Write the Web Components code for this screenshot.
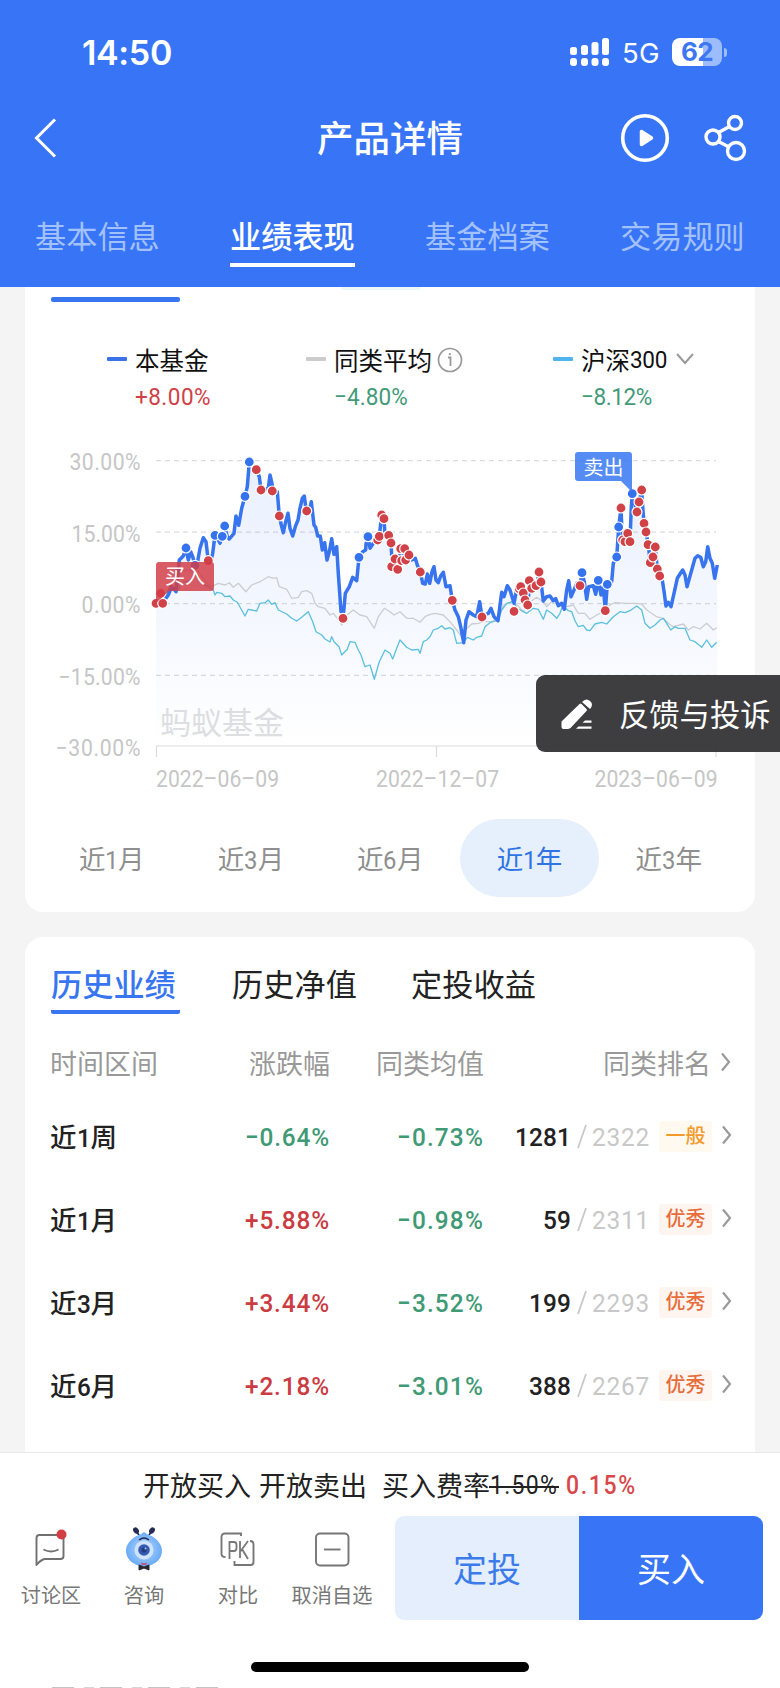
<!DOCTYPE html>
<html lang="zh-CN">
<head>
<meta charset="utf-8">
<title>产品详情</title>
<style>
html,body{margin:0;padding:0}
body{width:780px;height:1688px;overflow:hidden;background:#f4f4f4;font-family:Roboto,"Noto Sans CJK SC",sans-serif;color:#222}
</style>
</head>
<body>
<fund-page></fund-page>
<script>
const define = (name, html, setup) => {
  const t = document.createElement('template');
  t.innerHTML = html;
  customElements.define(name, class extends HTMLElement {
    connectedCallback() {
      if (this.shadowRoot) return;
      this.attachShadow({mode: 'open'}).appendChild(t.content.cloneNode(true));
      if (setup) setup(this, this.shadowRoot);
    }
  });
};

/* Condensed text (factor k) tracked to an exact width */
define('fit-text', `<style>:host{display:inline-block;white-space:nowrap;flex:none;text-align:left}span{display:inline-block;transform-origin:0 50%}</style><span><slot></slot></span>`,
  (el, root) => {
    const s = root.querySelector('span'), w = +el.getAttribute('w'), n = el.textContent.length;
    const k = +(el.getAttribute('k') || .92);
    s.style.letterSpacing = ((w / k - s.getBoundingClientRect().width) / n).toFixed(3) + 'px';
    s.style.transform = `scaleX(${k})`;
    s.style.marginRight = '-20px';
    el.style.width = w + 'px';
  });

define('status-bar', `<style>
:host{display:flex;height:104px;align-items:center;color:#fff;font-family:Inter,sans-serif;padding-left:82px;box-sizing:border-box}
.time{font-size:34px;font-weight:600}
.sig{margin-left:398px}
.net{font-size:27.5px;margin:2px 0 0 12px}
.bat{position:relative;width:50px;height:28px;border-radius:8px;margin-left:12px;background:linear-gradient(90deg,#fff 0 31px,#9dbcfb 31px);color:#3d78f2;font-size:26px;font-weight:700;line-height:28px;text-align:center}
.nub{width:3px;height:9px;border-radius:0 4px 4px 0;background:#9dbcfb;margin-left:2px}
</style>
<fit-text class="time" w="90" k="1">14:50</fit-text>
<svg class="sig" width="40" height="28" fill="#fff"><rect x="0" y="9" width="7" height="8" rx="2.5"/><rect x="11" y="7" width="7" height="10" rx="2.5"/><rect x="21.500" y="4" width="7" height="13" rx="2.500"/><rect x="32" y="0" width="7" height="17" rx="2.500"/><rect x="0" y="20" width="7" height="8" rx="3"/><rect x="11" y="20" width="7" height="8" rx="3"/><rect x="21.500" y="20" width="7" height="8" rx="3"/><rect x="32" y="20" width="7" height="8" rx="3"/></svg>
<fit-text class="net" w="38" k="1">5G</fit-text><div class="bat"><fit-text w="32" k="1">62</fit-text></div><div class="nub"></div>`);

define('nav-bar', `<style>
:host{display:grid;grid-template-columns:317px 148px 1fr;height:68px;align-items:center;color:#fff}
.t{font-size:36.500px;font-weight:500;white-space:nowrap;line-height:68px;margin:2px 0 -2px}
.l{padding-left:33px}svg{display:block}.r{display:flex;justify-content:flex-end;gap:31px;padding-right:33px}
</style>
<div class="l"><svg width="26" height="42" fill="none" stroke="#fff" stroke-width="3"><path d="M22 2.500 3.500 21 22 39.500"/></svg></div>
<div class="t">产品详情</div>
<div class="r">
<svg width="50" height="50" fill="none" stroke="#fff"><circle cx="25" cy="25" r="22.300" stroke-width="3.600"/><path d="M21.500 18.500v13l10-6.500z" fill="#fff" stroke-width="3.500" stroke-linejoin="round"/></svg>
<svg width="46" height="50" fill="none" stroke="#fff" stroke-width="3.400"><circle cx="34" cy="10" r="6.500"/><circle cx="12" cy="24" r="7"/><circle cx="35" cy="38" r="8.500"/><path d="m17.500 19.500 11-6M17.500 28.500l9.500 5"/></svg>
</div>`);

define('page-tabs', `<style>
:host{display:flex;height:115px;box-sizing:border-box;padding:41px 35px 0;justify-content:space-between;font-size:31.200px;color:#a3c1fb;line-height:49px}
div{width:125px;height:49.500px;white-space:nowrap}
.on{color:#fff;font-weight:500;border-bottom:4.500px solid #fff}
</style><div>基本信息</div><div class="on">业绩表现</div><div>基金档案</div><div>交易规则</div>`);

define('legend-item', `<style>
:host{display:grid;grid-template-columns:28px auto;color:#111;align-content:start}
i{width:20px;height:4px;border-radius:1px;background:var(--c);margin-top:15px}
.n{display:flex;align-items:center;font-size:24.500px;height:34px;white-space:nowrap}
.v{grid-column:2;font-size:24.500px;line-height:32px;margin-top:5px;color:var(--v)}
</style><i></i><div class="n"><slot></slot></div><div class="v"><slot name="v"></slot></div>`);

define('chart-legend', `<style>:host{display:grid;grid-template-columns:199px 247px 1fr;padding:0 0 0 82px;height:90px}
legend-item{--v:#429b78}svg{flex:none}</style>
<legend-item style="--c:#3c72e8;--v:#cf4147">本基金<fit-text slot="v" w="76">+8.00%</fit-text></legend-item>
<legend-item style="--c:#ccc">同类平均<svg width="26" height="26" style="margin:1px 0 0 5px" fill="none" stroke="#999" stroke-width="1.700"><circle cx="13" cy="13" r="11.500"/><path d="M11 10.500h2.500V19" stroke-width="1.800"/><circle cx="12.800" cy="7.200" r="1.100" fill="#999" stroke="none"/></svg><fit-text slot="v" w="74">−4.80%</fit-text></legend-item>
<legend-item style="--c:#50b5ee">沪深<fit-text w="37">300</fit-text><svg width="20" height="14" style="margin-left:8px" fill="none" stroke="#999" stroke-width="2"><path d="m2 2 8 9 8-9"/></svg><fit-text slot="v" w="71">−8.12%</fit-text></legend-item>`);

define('fund-chart', `<style>:host{display:block}svg{display:block;font-family:Roboto,"Noto Sans CJK SC",sans-serif}</style>
<svg width="730" height="370" viewBox="25 430 730 370">
<defs><linearGradient id="g" gradientUnits="userSpaceOnUse" x1="0" y1="460" x2="0" y2="746"><stop offset="0" stop-color="#3875f6" stop-opacity=".11"/><stop offset=".6" stop-color="#3875f6" stop-opacity=".05"/><stop offset="1" stop-color="#3875f6" stop-opacity="0"/></linearGradient></defs>
<g id="grid" stroke="#dcdcdc" stroke-width="1.200" stroke-dasharray="5 4"></g>
<path d="M156.500 757v-11H716v11M436.500 746v11" fill="none" stroke="#dcdcdc" stroke-width="1.200"/>
<g id="labels" fill="#c6c6c6" font-size="23.500"></g>
<text x="160" y="734" font-size="31" fill="#dedfe2">蚂蚁基金</text>
<path id="area" fill="url(#g)"/>
<g fill="none" stroke-linejoin="round"><path id="gray" stroke="#cbcdd0" stroke-width="1.300"/><path id="cyan" stroke="#5bc0de" stroke-width="1.300"/><path id="blue" stroke="#3774ee" stroke-width="3.500"/></g>
<g id="dots" stroke="#fff" stroke-width="1.200"></g>
<path d="M159 562h52q3 0 3 3v23q0 3-3 3h-42l-13 12v-38q0-3 3-3z" fill="#d23c46" fill-opacity=".84"/>
<text x="165" y="584" font-size="20" fill="#fff">买入</text>
<path d="M578 452h51q3 0 3 3v37l-11-11h-43q-3 0-3-3v-23q0-3 3-3z" fill="#3c7bf2" fill-opacity=".87"/>
<text x="583.500" y="474.500" font-size="20" fill="#fff">卖出</text>
</svg>`, (el, r) => {
  const L = 420, R = 1290;
  const pts = (s, o) => s.split(' ').map(p => p.split(',').map(Number)).map(([x, y]) => [(x + o) / 3, 440 + y / 3]);
  const join = (a, b) => pts(a, L).concat(pts(b, R));
  const path = p => 'M' + p.map(q => q.map(v => v.toFixed(1)).join(' ')).join('L');
  const blue = join(
   '48,490 68,488 85,465 95,440 108,455 118,360 130,348 138,325 145,360 152,335 158,350 165,375 172,370 180,325 190,293 198,305 205,362 212,365 218,340 225,286 235,300 240,310 247,289 254,258 262,290 268,297 282,280 288,228 296,256 305,205 315,169 322,140 328,66 349,89 358,110 363,150 385,145 390,105 396,130 398,153 412,155 418,228 424,255 430,278 437,245 444,220 450,265 458,288 466,260 474,240 480,205 487,175 493,168 499,213 508,215 514,185 522,255 527,262 533,288 541,288 547,330 554,308 561,360 568,335 575,296 582,343 590,320 595,400 603,515 611,515 616,460 628,440 638,412 650,422 657,352 668,335 677,330 678,312 684,290 690,325 700,310 712,305 718,289 725,225 732,236 735,285 745,285 753,309 757,380 765,357 772,388 782,326 794,326 790,365 807,345 815,360 826,355 832,375 841,396 848,430 856,432 862,402 869,430 876,395',
   '12,380 18,420 25,428 32,408 40,397 48,440 60,437 67,481 75,510 85,530 92,560 101,608 108,540 117,515 130,525 140,530 149,485 156,530 175,520 183,505 192,530 204,542 215,457 222,470 232,437 240,450 252,490 260,448 272,440 280,460 285,480 293,495 300,420 307,445 320,438 327,396 333,426 340,483 350,470 360,468 370,482 377,476 385,497 395,490 403,508 410,450 416,422 423,470 432,450 440,430 450,437 456,398 463,425 470,478 476,440 490,437 497,463 505,421 513,465 520,440 526,512 532,433 545,425 550,370 560,351 566,261 573,204 577,300 585,305 593,280 600,305 604,200 607,161 620,216 627,186 635,150 638,200 642,250 648,276 655,314 661,368 669,351 676,321 682,387 689,408 697,420 703,460 708,498 715,487 723,500 732,460 742,415 750,402 758,390 765,405 771,440 785,390 795,355 803,347 812,352 820,380 827,365 833,320 840,355 847,370 854,415 862,375');
  const gray = join(
   '48,490 70,480 100,420 120,395 140,390 155,395 165,380 180,400 200,430 215,440 235,430 255,435 268,428 280,442 295,430 318,455 335,435 360,425 385,410 400,415 410,413 418,440 440,448 455,475 475,472 485,455 500,452 515,460 525,490 535,500 555,505 570,525 580,520 600,545 605,555 615,530 640,510 660,525 680,530 703,565 715,530 733,505 750,515 762,525 780,515 800,535 820,535 840,547 855,530',
   '0,523 15,520 40,525 60,545 80,570 100,597 105,570 125,552 145,550 160,545 185,545 205,535 220,495 245,485 265,498 280,515 295,490 320,472 340,485 350,500 370,480 390,495 410,500 430,495 445,520 465,520 480,538 500,525 520,515 540,495 555,488 590,490 620,490 635,492 650,510 680,530 700,535 715,550 730,560 760,552 775,570 790,560 810,567 830,550 850,570 860,563');
  const cyan = join(
   '48,490 68,480 90,440 110,455 125,430 150,420 165,400 185,430 205,440 220,450 225,465 230,457 245,460 255,470 270,468 280,480 292,487 315,528 325,508 335,510 350,513 360,490 375,488 385,480 395,493 405,488 415,510 440,522 455,535 470,543 485,532 505,515 518,545 528,575 545,585 555,597 570,606 575,590 582,605 597,620 605,645 622,628 630,605 645,607 655,630 663,645 675,680 690,675 703,718 718,665 735,630 750,640 758,657 770,625 780,600 800,622 815,630 835,628 840,640 850,605 860,600',
   '0,590 10,570 25,565 35,557 45,567 60,563 70,570 80,610 100,608 112,592 130,600 140,592 155,588 165,560 180,548 205,540 215,510 230,490 250,485 262,505 280,515 290,520 310,505 325,508 340,538 350,510 365,520 380,535 390,520 395,505 403,500 415,512 425,515 435,542 445,560 460,556 470,570 480,572 495,552 515,547 530,552 550,530 570,515 585,518 600,512 620,498 635,510 645,550 660,565 675,555 690,540 700,535 710,550 722,570 735,560 745,565 765,565 780,600 795,605 815,622 830,600 845,622 860,607');
  const red = join(
   '48,490 62,460 68,490 205,362 349,89 363,150 397,153 418,228 500,213 609,535 725,225 732,236 713,300 718,289 746,286 753,309 755,380 765,357 773,388 782,326 794,326 785,362 797,360 807,345 841,396',
   '67,481 156,531 252,514 268,447 272,440 280,459 285,480 293,495 298,422 305,445 318,437 327,396 333,426 450,437 526,512 573,204 578,300 585,305 593,280 600,305 635,150 627,186 621,216 642,250 648,276 654,314 676,321 661,368 669,351 682,387 689,408');
  const sold = join('138,324 165,376 225,286 247,289 254,258 315,169 328,66 657,352 684,290', '456,398 505,421 532,433 560,351 566,261 607,161');
  const $ = id => r.getElementById(id);
  $('blue').setAttribute('d', path(blue));
  $('gray').setAttribute('d', path(gray));
  $('cyan').setAttribute('d', path(cyan));
  $('area').setAttribute('d', path(blue) + 'V746H156Z');
  const dot = c => ([x, y]) => `<circle cx="${x.toFixed(1)}" cy="${y.toFixed(1)}" r="5" fill="${c}"/>`;
  $('dots').innerHTML = sold.map(dot('#3572ee')).join('') + red.map(dot('#d04247')).join('');
  $('grid').innerHTML = [460.7, 532.2, 603.7, 675.3].map(y => `<path d="M156 ${y}H716"/>`).join('');
  const rows = [['30.00%', 470, 71], ['15.00%', 541.7, 69], ['0.00%', 613.2, 59], ['−15.00%', 684.7, 82], ['−30.00%', 756, 85]];
  const dates = [['2022–06–09', 156], ['2022–12–07', 376], ['2023–06–09', 594.5]];
  const K = .9;
  const label = (t, x, y, w) => `<text transform="translate(${x} ${y}) scale(${K} 1)" textLength="${(w / K).toFixed(1)}">${t}</text>`;
  $('labels').innerHTML =
    rows.map(([t, y, w]) => label(t, 140.5 - w, y, w)).join('') +
    dates.map(([t, x]) => label(t, x, 787, 123)).join('');
});

define('period-tabs', `<style>
:host{display:grid;grid-template-columns:repeat(5,139.300px);padding-left:17px;height:78px;font-size:26.500px;color:#8f8f8f;line-height:81px;text-align:center}
div{display:flex;justify-content:center;height:77.500px}
.on{background:#e6effc;color:#2f74e4;border-radius:39px}
</style><div>近<fit-text w="12.5" k="0.9">1</fit-text>月</div><div>近<fit-text w="13.5" k="0.9">3</fit-text>月</div><div>近<fit-text w="13.5" k="0.9">6</fit-text>月</div><div class="on">近<fit-text w="12.5" k="0.9">1</fit-text>年</div><div>近<fit-text w="13.5" k="0.9">3</fit-text>年</div>`);

define('chart-card', `<style>
:host{display:block;height:625px;background:#fff;border-radius:0 0 18px 18px;overflow:hidden}
.top{display:flex;height:3px;padding-left:316px}.chip{width:80px;background:#edf6f9;border-radius:0 0 6px 6px}
.line{width:129px;height:5px;border-radius:2px;background:#3875f0;margin:7px 0 40px 26px}
period-tabs{margin-top:19px}chart-legend{height:88px}
</style><div class="top"><div class="chip"></div></div><div class="line"></div><chart-legend></chart-legend><fund-chart></fund-chart><period-tabs></period-tabs>`);

define('history-row', `<style>
:host{display:grid;grid-template-columns:100px 179px 154px 166px 62px 20px;height:83px;align-items:center;font-size:26.500px;font-weight:500;color:#222}
.p{margin:-3px 0 0 -1px;display:flex;align-items:baseline}
.n{text-align:right;margin-top:-1px}.up{color:#cb3b42}.dn{color:#3f9a75}
.rank{display:flex;justify-content:flex-end;align-items:center;margin-top:-1px}.all{color:#c8c8c8;font-weight:400;display:flex;align-items:center}
.b{justify-self:end;width:53px;height:31px;line-height:30px;border-radius:3px;font-size:20px;text-align:center;background:#fef5f1;color:#e76d3b}
.b.m{background:#fff9ef;color:#f39a2d}
svg{justify-self:end;margin-bottom:3px}
</style><div class="p"></div><div class="n a"></div><div class="n dn c"></div><div class="rank"></div><div class="b"></div>
<svg width="11" height="20" fill="none" stroke="#9a9a9a" stroke-width="2.200"><path d="m2 1.500 7 8.500-7 8.500"/></svg>`,
(el, r) => {
  const [p, a, c, k, all, b] = el.getAttribute('data').split('|');
  const $ = s => r.querySelector(s);
  $('.p').innerHTML = `${p[0]}<fit-text w="14">${p[1]}</fit-text>${p[2]}`;
  $('.a').innerHTML = `<fit-text w="85">${a}</fit-text>`;
  $('.a').classList.add(a[0] === '+' ? 'up' : 'dn');
  $('.c').innerHTML = `<fit-text w="87">${c}</fit-text>`;
  $('.rank').innerHTML = `<fit-text w="${k.length * 14}">${k}</fit-text><span class="all"><svg width="10" height="30" stroke="#c8c8c8" stroke-width="1.800" style="margin:0 5px 0 6px"><path d="M9 4 1 27"/></svg><fit-text w="58">${all}</fit-text></span>`;
  $('.b').textContent = b;
  if (b === '一般') $('.b').classList.add('m');
});

define('history-card', `<style>
:host{display:block;height:540px;background:#fff;border-radius:18px 18px 0 0;padding:23px 26px 0;box-sizing:border-box}
.tabs{display:flex;gap:50px;font-size:31.200px;line-height:52px}
.tabs div{width:129px;height:50px;text-align:center;white-space:nowrap}
.tabs .on{color:#3875f0;font-weight:500;border-bottom:4.500px solid #3875f0;border-radius:2px;text-align:left}
.head{display:grid;grid-template-columns:109px 170px 154px 227px 20px;height:62px;margin:17px 0 2px;align-items:center;font-size:27px;color:#999;white-space:nowrap}
.head div:first-child{margin-left:-1px}
.head div+div{text-align:right}.head svg{justify-self:end;margin-bottom:1px}
</style>
<div class="tabs"><div class="on">历史业绩</div><div>历史净值</div><div>定投收益</div></div>
<div class="head"><div>时间区间</div><div>涨跌幅</div><div>同类均值</div><div>同类排名</div><svg width="11" height="20" fill="none" stroke="#9a9a9a" stroke-width="2.200"><path d="m2 1.500 7 8.500-7 8.500"/></svg></div>
<history-row data="近1周|−0.64%|−0.73%|1281|2322|一般"></history-row>
<history-row data="近1月|+5.88%|−0.98%|59|2311|优秀"></history-row>
<history-row data="近3月|+3.44%|−3.52%|199|2293|优秀"></history-row>
<history-row data="近6月|+2.18%|−3.01%|388|2267|优秀"></history-row>`);

define('feedback-button', `<style>
:host{position:absolute;left:536px;top:675px;width:244px;height:77px;box-sizing:border-box;padding-left:24px;display:flex;align-items:center;gap:26px;background:rgba(50,50,52,.94);border-radius:9px 0 0 9px;color:#fff;font-size:30.300px;white-space:nowrap}
svg{flex:none}span{margin-top:-2px}</style>
<svg width="33" height="34" fill="#fff"><path d="M1.500 24.500 19.500 7q1-1 2 0l5 5q1 1 0 2L10.500 31q-1.500 1-3 1H3.500q-2 0-2-2z"/><path d="M22 5q4-4.500 8-1t0 8z"/><path d="M25 23.500h6.500v2.300H22.500zM18.500 29.500H31.500v2.300H16z"/></svg><span>反馈与投诉</span>`);

define('tool-item', `<style>:host{display:flex;flex-direction:column;align-items:center;font-size:20.200px;line-height:30px;color:#777;white-space:nowrap}
.i{height:50px;margin-bottom:7px}</style><div class="i"><slot name="icon"></slot></div><slot></slot>`);

define('bottom-bar', `<style>
:host{display:block;position:relative;height:236px;background:#fff;border-top:1px solid #e8e8e8;box-sizing:border-box;overflow:hidden}
.fee{display:flex;height:63px;padding-left:143px;align-items:center;font-size:27px;white-space:nowrap;color:#222;box-sizing:border-box}
.fee span{width:116px}.fee span+span{width:123px}.fee b{font-weight:400;width:108px}
s{text-decoration:none;position:relative;font-size:25px;margin-top:2px}s::after{content:"";position:absolute;left:-1px;right:-1px;top:50%;height:2px;background:#222}
.red{color:#d8484b;font-weight:500;font-size:25px;margin:2px 0 0 8px}
.row{display:grid;grid-template-columns:102px 84px 104px 84px 368px;height:104px}
tool-item{margin-top:8px}
.btns{display:grid;grid-template-columns:1fr 1fr;border-radius:9px;overflow:hidden;margin-left:21px;width:368px;height:104px;font-size:34px;line-height:109px;text-align:center;background:#e4eefd;color:#3c7bea}
.buy{background:#3875f6;color:#fff}
.home{width:278px;height:10px;border-radius:5px;background:#000;margin:42px 0 0 251px}
.under{height:1px;margin-top:15px;margin-left:52px;width:170px;background:repeating-linear-gradient(90deg,#c4c4c4 0 22px,transparent 22px 32px,#d4d4d4 32px 42px,transparent 42px 48px)}
svg{display:block}.bot{margin-top:1px}
</style>
<div class="fee"><span>开放买入</span><span>开放卖出</span><b>买入费率</b><s><fit-text w="68">1.50%</fit-text></s><fit-text class="red" w="71">0.15%</fit-text></div>
<div class="row">
<tool-item><svg slot="icon" width="44" height="50" fill="none" stroke="#707070" stroke-width="1.900"><path d="M7.500 41V14q0-3 3-3h21q3 0 3 3v18q0 3-3 3H15.500q-4 1-8 6z" stroke-linejoin="round"/><path d="M14.500 25.500q7.500 4 15 0"/><circle cx="32.500" cy="10.500" r="5" fill="#d13e43" stroke="none"/></svg>讨论区</tool-item>
<tool-item><svg slot="icon" class="bot" width="44" height="50"><defs><radialGradient id="b"><stop offset="0" stop-color="#d6e9ff"/><stop offset=".5" stop-color="#91c1fb"/><stop offset="1" stop-color="#6aabf6"/></radialGradient></defs><path d="m17 10-3-4M27 10l3-4" stroke="#252a55" stroke-width="1.800"/><ellipse cx="14" cy="5.500" rx="2.600" ry="3.400" transform="rotate(-35 14 5.500)" fill="#252a55"/><ellipse cx="30" cy="5.500" rx="2.600" ry="3.400" transform="rotate(35 30 5.500)" fill="#252a55"/><path d="M22 7q2.500 2 5 3c7 2.500 13 9 13 15.500 0 8-6 15-18 16-12-1-18-8-18-16C4 19 10 12.500 17 10q2.500-1 5-3z" fill="url(#b)"/><circle cx="22" cy="25" r="9.500" fill="#cfe3fc"/><circle cx="22" cy="25" r="5.800" fill="#345bae"/><circle cx="22" cy="25" r="2.600" fill="#253c86"/><circle cx="23.500" cy="23.500" r="1" fill="#a8c6f2"/><path d="M17 15q5-4 10 0" fill="none" stroke="#202852" stroke-width="1.500"/><path d="M19 37.500q3 1.500 6 0l-1 2.500h-4z" fill="#c95070"/><path d="m17 40 5 2 5-2v5l-5-2-5 2z" fill="#262832" stroke="#262832" stroke-linejoin="round"/></svg>咨询</tool-item>
<tool-item><svg slot="icon" width="44" height="50" fill="none" stroke="#777" stroke-width="1.900"><path d="M25 12V9.500H9q-3.500 0-3.500 3.500v17q0 3 4 3M34 17q3.500 0 3.500 3.500V38q0 3-3 3H18.500v-4"/><path d="M13.500 35V18h4.500q2.500 0 2.500 3v3q0 3-2.500 3h-4.500M24 17v17M32 17l-8 11M26 25l6 10" stroke-width="1.800"/></svg>对比</tool-item>
<tool-item><svg slot="icon" width="44" height="50" fill="none" stroke="#777" stroke-width="1.900"><rect x="6" y="9.500" width="32.500" height="32" rx="4"/><path d="M14 25.500h16.500"/></svg>取消自选</tool-item>
<div class="btns"><div>定投</div><div class="buy">买入</div></div>
</div>
<div class="home"></div><div class="under"></div>`);

define('fund-page', `<style>
:host{display:flex;flex-direction:column;width:780px;height:1688px;position:relative;overflow:hidden}
header{background:#3875f6;height:287px;flex:none}
main{height:1165px;flex:none;padding:0 25px;overflow:hidden;box-sizing:border-box;background:#f4f4f4}
history-card{margin-top:25px}
</style>
<header><status-bar></status-bar><nav-bar></nav-bar><page-tabs></page-tabs></header>
<main><chart-card></chart-card><history-card></history-card></main>
<bottom-bar></bottom-bar>
<feedback-button></feedback-button>`);
</script>
</body>
</html>
